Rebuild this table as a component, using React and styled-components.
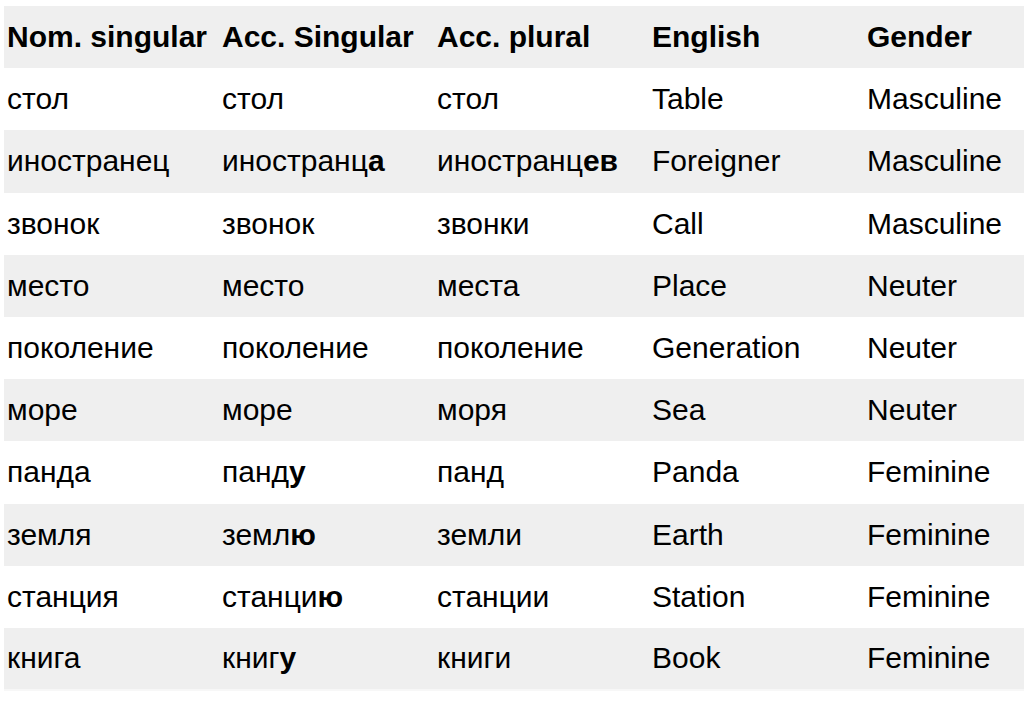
import styled, { createGlobalStyle } from 'styled-components';

const GlobalStyle = createGlobalStyle`
  html, body {
    margin: 0;
    padding: 0;
    background: #ffffff;
    overflow: hidden;
  }
  body {
    font-family: 'Liberation Sans', Arial, sans-serif;
    color: #000000;
  }
`;

const Table = styled.table`
  margin: 6px 0 0 4px;
  width: 1020px;
  table-layout: fixed;
  border-collapse: collapse;
  border-bottom: 2px solid #f7f7f7;
  font-size: 30px;
`;

const Row = styled.tr`
  height: 62.2px;
  background: ${(p) => (p.$shaded ? '#efefef' : '#ffffff')};
`;

const HeadCell = styled.th`
  box-sizing: border-box;
  width: ${(p) => (p.$last ? 'auto' : '215px')};
  padding: 0 0 0 3px;
  text-align: left;
  font-weight: bold;
  white-space: nowrap;
  overflow: hidden;
`;

const Cell = styled.td`
  padding: 0 0 0 3px;
  white-space: nowrap;
  overflow: hidden;
  vertical-align: middle;
`;

const Ending = styled.b`
  font-weight: bold;
`;

const headers = ['Nom. singular', 'Acc. Singular', 'Acc. plural', 'English', 'Gender'];

// [stem, bold ending] pairs for the accusative forms
const words = [
  ['стол', ['стол', ''], ['стол', ''], 'Table', 'Masculine'],
  ['иностранец', ['иностранц', 'а'], ['иностранц', 'ев'], 'Foreigner', 'Masculine'],
  ['звонок', ['звонок', ''], ['звонки', ''], 'Call', 'Masculine'],
  ['место', ['место', ''], ['места', ''], 'Place', 'Neuter'],
  ['поколение', ['поколение', ''], ['поколение', ''], 'Generation', 'Neuter'],
  ['море', ['море', ''], ['моря', ''], 'Sea', 'Neuter'],
  ['панда', ['панд', 'у'], ['панд', ''], 'Panda', 'Feminine'],
  ['земля', ['земл', 'ю'], ['земли', ''], 'Earth', 'Feminine'],
  ['станция', ['станци', 'ю'], ['станции', ''], 'Station', 'Feminine'],
  ['книга', ['книг', 'у'], ['книги', ''], 'Book', 'Feminine'],
];

function Form({ form }) {
  const [stem, ending] = form;
  return (
    <>
      {stem}
      {ending && <Ending>{ending}</Ending>}
    </>
  );
}

export default function App() {
  return (
    <>
      <GlobalStyle />
      <Table>
        <thead>
          <Row $shaded>
            {headers.map((h, i) => (
              <HeadCell key={h} $last={i === headers.length - 1}>
                {h}
              </HeadCell>
            ))}
          </Row>
        </thead>
        <tbody>
          {words.map(([nom, accSg, accPl, english, gender], i) => (
            <Row key={nom} $shaded={i % 2 === 1}>
              <Cell>{nom}</Cell>
              <Cell>
                <Form form={accSg} />
              </Cell>
              <Cell>
                <Form form={accPl} />
              </Cell>
              <Cell>{english}</Cell>
              <Cell>{gender}</Cell>
            </Row>
          ))}
        </tbody>
      </Table>
    </>
  );
}
